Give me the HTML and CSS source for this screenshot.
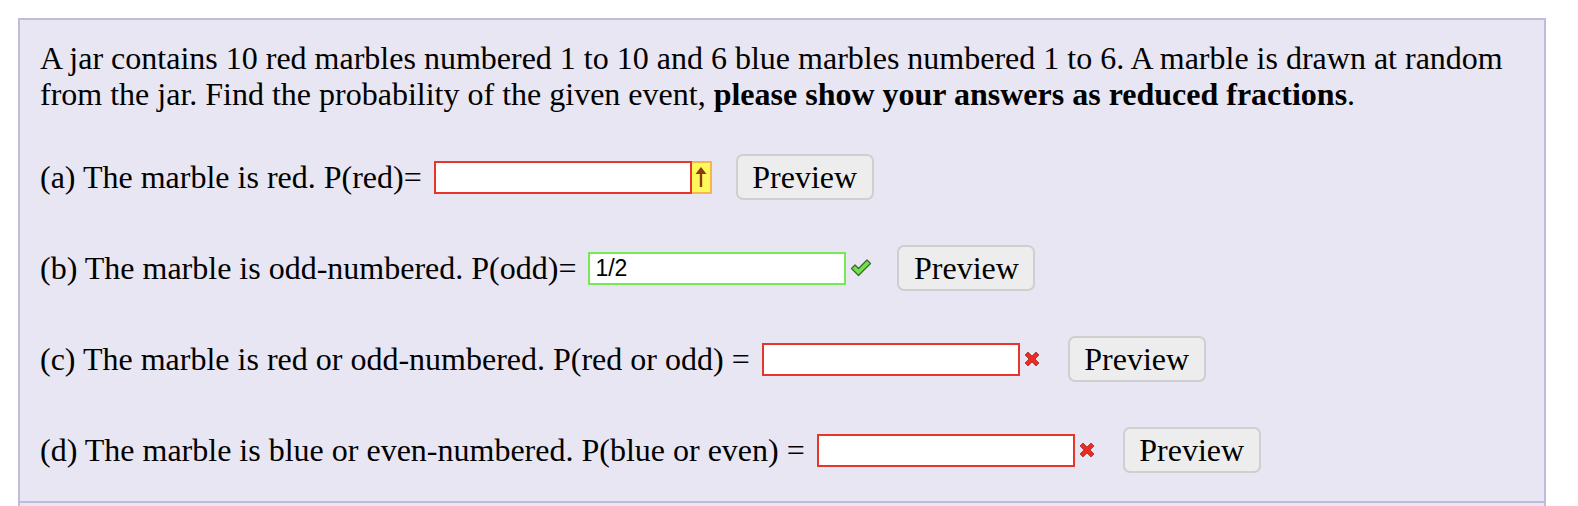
FILE: index.html
```html
<!DOCTYPE html>
<html>
<head>
<meta charset="utf-8">
<link rel="stylesheet" href="styles.css">
</head>
<body>
<div class="page">
  <div class="problem">
    <div class="main">
      <p class="intro">A jar contains 10 red marbles numbered 1 to 10 and 6 blue marbles numbered 1 to 6. A marble is drawn at random from the jar. Find the probability of the given event, <b>please show your answers as reduced fractions</b>.</p>

      <div class="row">
        <span class="label">(a) The marble is red. P(red)=</span>
        <span class="answer bad"></span>
        <span class="flag warn"><svg width="12" height="22" viewBox="0 0 12 22"><path d="M6 1 L11.5 8 L7.2 8 L7.2 21 L4.8 21 L4.8 8 L0.5 8 Z" fill="#8a3a12"/></svg></span>
        <span class="btn btn-a">Preview</span>
      </div>

      <div class="row">
        <span class="label">(b) The marble is odd-numbered. P(odd)=</span>
        <span class="answer good">1/2</span>
        <span class="mark"><svg width="22" height="20" viewBox="0 0 22 20"><path d="M1.5 10.5 L5 7 L8.5 10.5 L17 2 L20.5 5.5 L8.5 17.5 Z" fill="#6fe34a" stroke="#3a6a2a" stroke-width="1.3" stroke-linejoin="round"/></svg></span>
        <span class="btn btn-b">Preview</span>
      </div>

      <div class="row">
        <span class="label">(c) The marble is red or odd-numbered. P(red or odd) =</span>
        <span class="answer bad"></span>
        <span class="mark cross"><svg width="18" height="18" viewBox="0 0 18 18"><path d="M2 5 L5 2 L9 6 L13 2 L16 5 L12 9 L16 13 L13 16 L9 12 L5 16 L2 13 L6 9 Z" fill="#ee2b22" stroke="#9a3030" stroke-width="0.8" stroke-linejoin="round"/></svg></span>
        <span class="btn btn-c">Preview</span>
      </div>

      <div class="row">
        <span class="label">(d) The marble is blue or even-numbered. P(blue or even) =</span>
        <span class="answer bad"></span>
        <span class="mark cross"><svg width="18" height="18" viewBox="0 0 18 18"><path d="M2 5 L5 2 L9 6 L13 2 L16 5 L12 9 L16 13 L13 16 L9 12 L5 16 L2 13 L6 9 Z" fill="#ee2b22" stroke="#9a3030" stroke-width="0.8" stroke-linejoin="round"/></svg></span>
        <span class="btn btn-d">Preview</span>
      </div>
    </div>
    <div class="next"></div>
  </div>
</div>
</body>
</html>
```

FILE: styles.css
```css
html, body {
  margin: 0;
  padding: 0;
  background: #ffffff;
}
body {
  font-family: "Liberation Serif", "Times New Roman", serif;
  color: #000;
}
.page {
  padding: 18px 0 0 18px;
  width: 1528px;
}
.problem {
  border: 2px solid #bdbcdc;
  border-bottom: none;
  background: #e8e6f2;
}
.main {
  padding: 20px 20px 28px 20px;
}
.intro {
  margin: 0 0 42px 0;
  font-size: 32px;
  line-height: 36px;
}
.intro b {
  font-weight: bold;
}
.row {
  display: flex;
  align-items: center;
  height: 46px;
  margin-bottom: 45px;
  font-size: 32px;
}
.row:last-child {
  margin-bottom: 0;
}
.label {
  white-space: nowrap;
}
.answer {
  box-sizing: border-box;
  width: 258px;
  height: 33px;
  margin-left: 12px;
  background: #fff;
  font-family: "Liberation Sans", Arial, sans-serif;
  font-size: 23px;
  line-height: 29px;
  padding-left: 5px;
}
.answer.bad {
  border: 2px solid #e8352b;
}
.answer.good {
  border: 2px solid #72ec50;
}
.flag.warn {
  box-sizing: border-box;
  width: 20px;
  height: 33px;
  background: #fdf95a;
  border: 2px solid #f7b64a;
  border-left: none;
  display: flex;
  align-items: center;
  justify-content: center;
}
.mark {
  display: flex;
  align-items: center;
  margin-left: 4px;
  width: 22px;
}
.mark.cross {
  margin-left: 3px;
  width: 20px;
}
.btn {
  box-sizing: border-box;
  display: flex;
  align-items: center;
  justify-content: center;
  height: 46px;
  width: 138px;
  background: #ededed;
  border: 2px solid #cfcfcf;
  border-radius: 7px;
  font-size: 32px;
}
.btn-a { margin-left: 24px; }
.btn-b { margin-left: 25px; }
.btn-c { margin-left: 25px; }
.btn-d { margin-left: 25px; }
.next {
  border-top: 2px solid #bdbcdc;
  background: #ede6ef;
  height: 40px;
}
```
